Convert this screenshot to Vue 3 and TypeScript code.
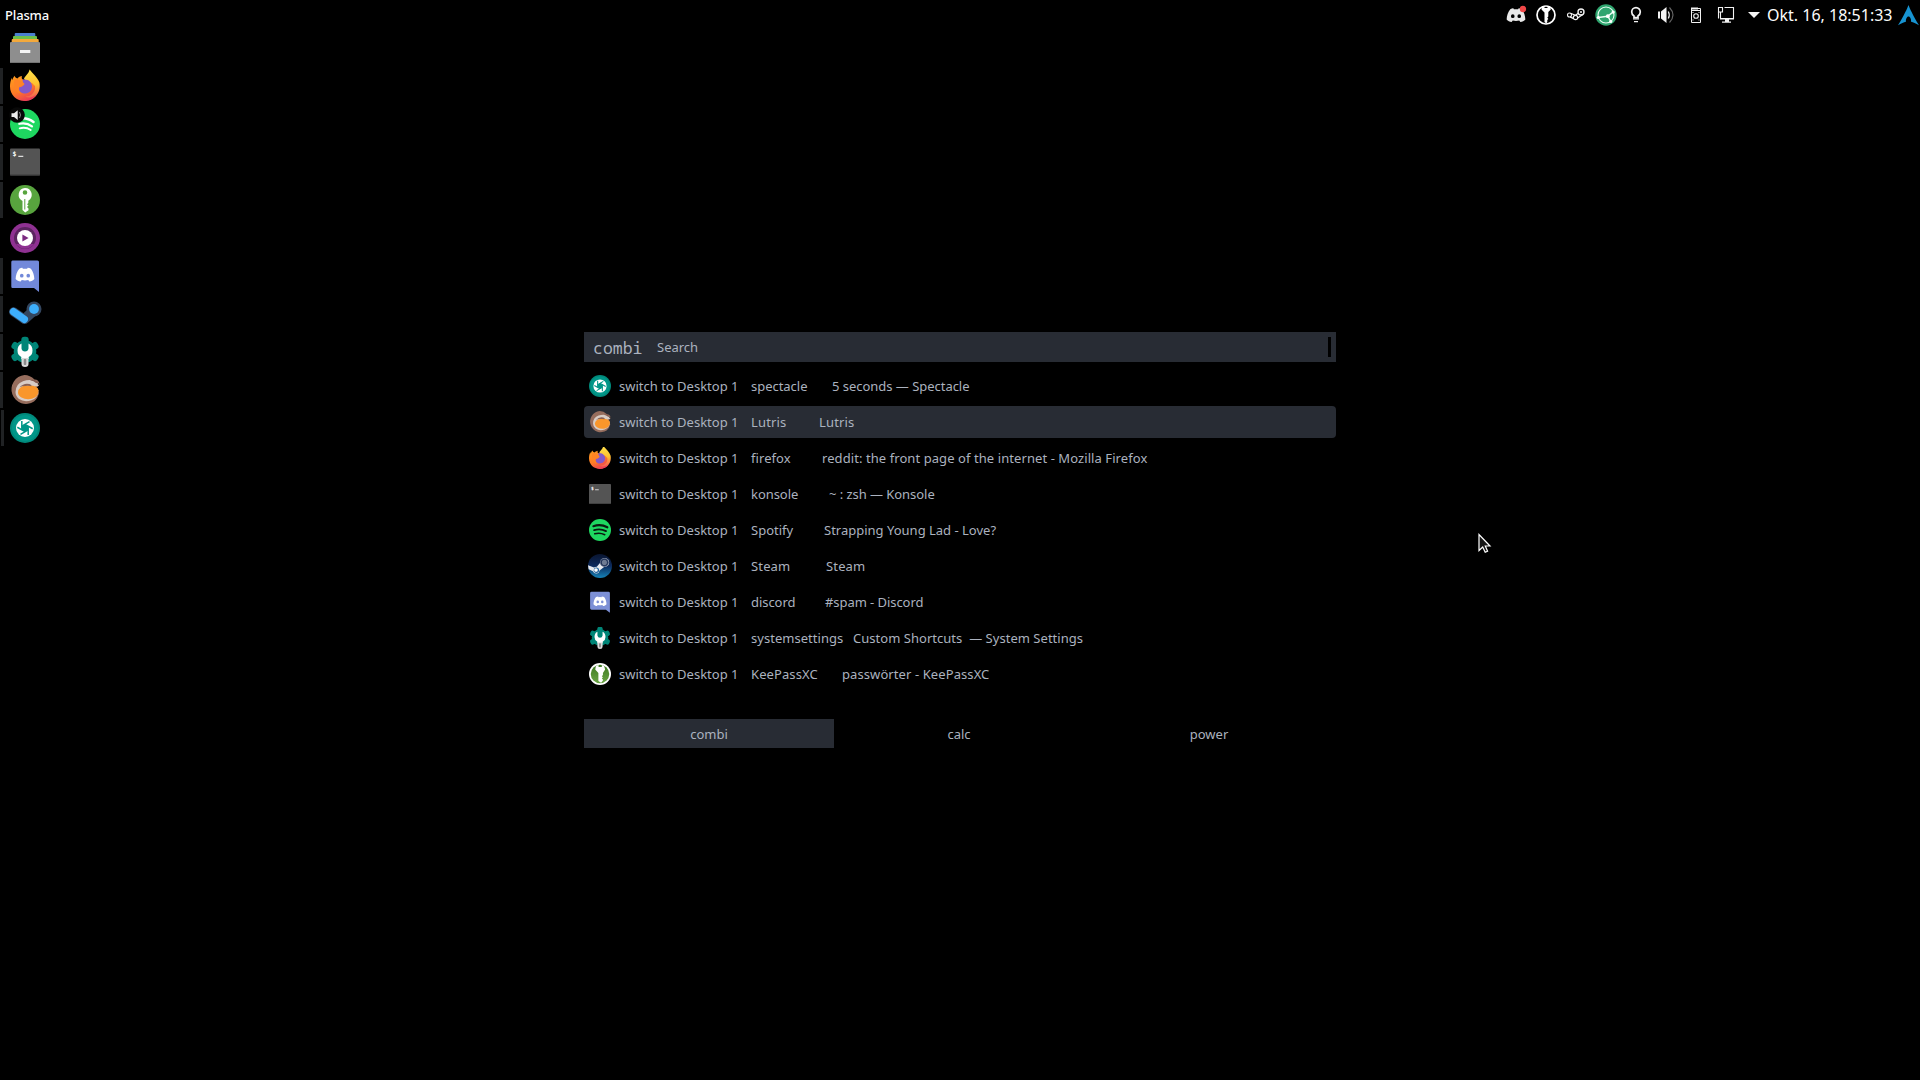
<script setup lang="ts">
interface DockItem { icon: string; running: boolean; active?: boolean }
interface WindowRow { icon: string; app: string; column: number; title: string; tracking?: number }

const dock: DockItem[] = [
  { icon: 'files', running: false },
  { icon: 'firefox', running: true },
  { icon: 'spotify-playing', running: true },
  { icon: 'konsole', running: true },
  { icon: 'keepass', running: true },
  { icon: 'player', running: false },
  { icon: 'discord', running: true },
  { icon: 'steam-blue', running: true },
  { icon: 'settings', running: true },
  { icon: 'lutris', running: true },
  { icon: 'spectacle', running: true, active: true },
]

// column: width in px the application name takes before the window title
// tracking: letter spacing in px for the row's texts
const rows: WindowRow[] = [
  { icon: 'spectacle', app: 'spectacle', column: 81, title: '5 seconds — Spectacle', tracking: -0.03 },
  { icon: 'lutris', app: 'Lutris', column: 68, title: 'Lutris', tracking: 0.15 },
  { icon: 'firefox', app: 'firefox', column: 71, title: 'reddit: the front page of the internet - Mozilla Firefox', tracking: 0.075 },
  { icon: 'konsole', app: 'konsole', column: 78, title: '~ : zsh — Konsole', tracking: -0.05 },
  { icon: 'spotify', app: 'Spotify', column: 73, title: 'Strapping Young Lad - Love?' },
  { icon: 'steam', app: 'Steam', column: 75, title: 'Steam', tracking: 0.15 },
  { icon: 'discord-light', app: 'discord', column: 74, title: '#spam - Discord', tracking: -0.06 },
  { icon: 'settings', app: 'systemsettings', column: 102, title: 'Custom Shortcuts  — System Settings', tracking: 0.03 },
  { icon: 'keepassxc', app: 'KeePassXC', column: 91, title: 'passwörter - KeePassXC', tracking: 0.09 },
]
const selected = 1
const tabs: string[] = ['combi', 'calc', 'power']
const tray: string[] = ['t-discord', 't-keepass', 't-steam', 't-sync', 't-bulb', 't-volume', 't-device', 't-screen']
</script>

<template>
  <div class="desktop">
    <svg class="defs" width="0" height="0" aria-hidden="true">
      <defs>
        <linearGradient id="g-fox" x1="0.2" y1="0" x2="0.7" y2="1">
          <stop offset="0" stop-color="#ff9a1f" /><stop offset="0.55" stop-color="#ff7a26" /><stop offset="1" stop-color="#e8365c" />
        </linearGradient>
        <linearGradient id="g-flame" x1="0.5" y1="0" x2="0.6" y2="1">
          <stop offset="0" stop-color="#ffe14a" /><stop offset="0.5" stop-color="#ffc02e" /><stop offset="1" stop-color="#f0455a" />
        </linearGradient>
        <linearGradient id="g-steam" x1="0" y1="0" x2="0" y2="1">
          <stop offset="0" stop-color="#0a1530" /><stop offset="0.5" stop-color="#0d2a5c" /><stop offset="1" stop-color="#1583b8" />
        </linearGradient>
        <linearGradient id="g-key" x1="0" y1="0" x2="0" y2="1">
          <stop offset="0" stop-color="#3f7a22" /><stop offset="1" stop-color="#6aa543" />
        </linearGradient>

        <symbol id="files" viewBox="0 0 30 30">
          <rect x="4.7" y="0" width="20.6" height="6" rx="1" fill="#4a7fcf" />
          <rect x="3" y="3" width="24" height="6" rx="1" fill="#6cc04a" />
          <rect x="1.7" y="6" width="27" height="6" rx="1" fill="#f3a93c" />
          <rect x="0" y="9" width="30" height="21" rx="1" fill="#8e8e8e" />
          <rect x="0" y="29" width="30" height="1" fill="#747474" />
          <rect x="10" y="17" width="10.3" height="3" fill="#f4f4f4" />
        </symbol>

        <symbol id="firefox" viewBox="0 0 30 30">
          <path d="M19.600-1.500C22 2 27.500 6 29.400 11.500C30.500 17 29 22 25.500 25.500C22 29 17.500 30 14 29.500C8 28 17 10 14 7.500C15.500 4.500 18.500 3 19.600-1.500Z" fill="url(#g-flame)" />
          <path d="M4.500 4.700C5 6 6 7 7.400 7.500C9 5.700 11 5.100 12 5C11.500 6.300 11.700 7.500 12.400 8.300L16.500 10L22 12L25 15C26 20.500 21.500 25.500 15.500 25.500C18 27 22 27 26.500 23.500C23.500 28 19 30 15 30C6.500 30 0 24 0 15.500C0 12.500.500 9 2 6.700L2.300 9.300C2.800 7.500 3.600 6 4.500 4.700Z" fill="url(#g-fox)" />
          <path d="M12.500 8.700C17.500 7.500 22 10.500 22 15.500C22 20 18.500 22.500 15 22.500C11 22.500 8.300 20 9 16C10.500 16.500 12.500 15.500 14.500 13.500C13.500 12.500 12.700 11 12.500 8.700Z" fill="#8359c9" />
          <path d="M4.500 8.500C8 7.500 10.500 10.500 14.500 12.600C13 14.800 10.500 14.800 9.300 16.200C8 18.500 9 21 11 22.500C5.500 22 3 14 4.500 8.500Z" fill="#ff8425" />
        </symbol>

        <symbol id="spotify-playing" viewBox="0 0 30 30">
          <circle cx="15" cy="15" r="15" fill="#1ed760" />
          <g fill="none" stroke="#fff" stroke-linecap="round">
            <path d="M9.500 9.500Q17.500 8.200 23.500 13" stroke-width="2.500" />
            <path d="M9.300 14.800Q16.500 13.200 22 17.300" stroke-width="2.200" />
            <path d="M9.700 19.300Q16 17.700 20.700 21" stroke-width="1.900" />
          </g>
          <circle cx="7" cy="6" r="7.800" fill="#080808" />
          <path d="M1.500 4.300h2.500l3.700-3v9.600l-3.700-3h-2.500z" fill="#eee" />
          <path d="M9.500 3q2 3 0 6" fill="none" stroke="#888" stroke-width="1" />
        </symbol>

        <symbol id="spotify" viewBox="0 0 30 30">
          <circle cx="15" cy="15" r="15" fill="#1ed760" />
          <g fill="none" stroke="#0a1a10" stroke-linecap="round">
            <path d="M6 9.800Q16 6.500 25 11.300" stroke-width="3" />
            <path d="M7 15.200Q15.500 12.500 23.200 16.500" stroke-width="2.500" />
            <path d="M7.800 20.200Q15 18 21.500 21.400" stroke-width="2.100" />
          </g>
        </symbol>

        <symbol id="konsole" viewBox="0 0 30 30">
          <rect x="0" y="1.500" width="30" height="27" rx="1" fill="#545454" />
          <rect x="0" y="27.500" width="30" height="1" fill="#3b3b3b" />
          <text x="2.600" y="9" font-family="DejaVu Sans Mono, monospace" font-weight="700" font-size="6.500" fill="#fff">$</text>
          <rect x="8.300" y="8.800" width="5" height="1" fill="#fff" />
        </symbol>

        <symbol id="keepass" viewBox="0 0 30 30">
          <circle cx="15" cy="15" r="15" fill="#58a43e" />
          <path fill-rule="evenodd" d="M15 3a6.800 6.800 0 0 1 3.300 12.700V18l-1.300 1.200 1.500 1.300-1.500 1.500 1.500 1.500v1.800L15.200 27.500 12.500 25V15.900A6.800 6.800 0 0 1 15 3ZM15 5.200a2.300 2.300 0 1 0 0 4.600 2.300 2.300 0 0 0 0-4.600ZM14.300 14v10.500h1V14Z" fill="#fff" />
        </symbol>

        <symbol id="keepassxc" viewBox="0 0 30 30">
          <circle cx="15" cy="15" r="15" fill="#fff" />
          <circle cx="15" cy="15" r="12.600" fill="url(#g-key)" />
          <path d="M9.500 3.600L13 2.700V5.500H17.500V2.700L20.500 3.600 22 9 19 13.500V16.500L17.500 18 19 19.500 17.500 21 19 22.500V24L16.500 27 12.800 24.500V13.500L8.500 9Z" fill="#fff" />
        </symbol>

        <symbol id="player" viewBox="0 0 30 30">
          <circle cx="15" cy="15" r="15" fill="#8f3192" />
          <circle cx="15" cy="15" r="11" fill="#5b2460" />
          <path d="M6 21A11 11 0 0 0 24 21Z" fill="#8f3192" />
          <circle cx="15" cy="15" r="8" fill="#fff" />
          <path d="M12.400 11.400L18.600 15 12.400 18.600Z" fill="#7b2a80" />
        </symbol>

        <symbol id="clyde" viewBox="0 0 22 15">
          <path fill-rule="evenodd" d="M5 1.200C6.300.500 7.600.200 8.200.200L8.800 1.300Q11 .900 13.200 1.300L13.800.200C15 .300 16.300.700 17.200 1.200C19.400 4 20.700 8 20.800 12C19.500 13.600 17.600 14.600 15.600 14.700L14.400 13.100Q11 14 7.600 13.100L6.400 14.700C4.400 14.600 2.500 13.600 1.200 12C1.300 8 2.600 4 5 1.200ZM7.600 6.500A1.900 2 0 1 0 7.600 10.500 1.900 2 0 0 0 7.600 6.500ZM14.400 6.500A1.900 2 0 1 0 14.400 10.500 1.900 2 0 0 0 14.400 6.500Z" />
        </symbol>

        <symbol id="discord" viewBox="0 0 30 30">
          <path d="M2.500-1H27.500Q29-1 29 .500V30.500L24 26.500H2.500Q1.300 26.500 1.300 25V.500Q1.300-1 2.500-1Z" transform="translate(0 .500)" fill="#7289da" />
          <use href="#clyde" x="4.500" y="6.500" width="21" height="14.500" fill="#fff" />
        </symbol>

        <symbol id="discord-light" viewBox="0 0 30 30">
          <path d="M3.500 1H26.500Q28.500 1 28.500 3V29.500L23 25.500H3.500Q1.500 25.500 1.500 23.500V3Q1.500 1 3.500 1Z" fill="#7d90d6" />
          <use href="#clyde" x="5" y="7" width="20" height="14" fill="#fff" />
        </symbol>

        <symbol id="steam-blue" viewBox="0 0 30 30">
          <path d="M14.500 20L24.500 11" fill="none" stroke="#34465f" stroke-width="10" stroke-linecap="round" />
          <path d="M3.500 12.700L14 20" fill="none" stroke="#34465f" stroke-width="9" stroke-linecap="round" />
          <circle cx="24" cy="10" r="7.500" fill="#34465f" />
          <path d="M3.500 12.700L14.300 20.300" fill="none" stroke="#3daefc" stroke-width="7.400" stroke-linecap="round" />
          <circle cx="24" cy="10" r="4.900" fill="#3daefc" />
        </symbol>

        <symbol id="steam" viewBox="0 0 30 30">
          <circle cx="15" cy="15" r="15" fill="url(#g-steam)" />
          <path d="M0 14L7.500 17Q9 16 11 16L15.500 10.500A5.500 5.500 0 1 1 20.500 16L14.500 20.500A4.300 4.300 0 0 1 6.200 21.500L.800 19Z" fill="#e6e8ec" />
          <circle cx="20.500" cy="10.500" r="5.600" fill="#566480" />
          <circle cx="20.500" cy="10.500" r="4.300" fill="#1a2b50" />
          <circle cx="20.500" cy="10.500" r="3.200" fill="#6f7b92" />
          <circle cx="10.500" cy="20.300" r="3.300" fill="#1c5f9b" />
          <circle cx="10" cy="20" r="2.300" fill="#fff" />
        </symbol>

        <symbol id="settings" viewBox="0 0 30 30">
          <g fill="#008577">
            <circle cx="15" cy="14.500" r="11.300" />
            <rect x="11.300" y="-.300" width="7.400" height="9" rx="3" />
            <rect x="11.300" y="-.300" width="7.400" height="9" rx="3" transform="rotate(60 15 14.500)" />
            <rect x="11.300" y="-.300" width="7.400" height="9" rx="3" transform="rotate(120 15 14.500)" />
            <rect x="11.300" y="-.300" width="7.400" height="9" rx="3" transform="rotate(240 15 14.500)" />
            <rect x="11.300" y="-.300" width="7.400" height="9" rx="3" transform="rotate(300 15 14.500)" />
          </g>
          <path d="M11.500 6.500V11.500Q12 14.500 15 14.500T18.500 11.500V6.500Q22.500 8.500 22.500 13.500Q22.500 18 18.700 20V22H11.300V20Q7.500 18 7.500 13.500Q7.500 8.500 11.500 6.500Z" fill="#fff" />
          <path d="M11.500 21H18.500V27Q18.500 30 15 30T11.500 27Z" fill="#d9d9d9" />
          <rect x="13.700" y="22" width="2.600" height="6" rx="1" fill="#8c8c8c" />
        </symbol>

        <symbol id="lutris" viewBox="0 0 30 30">
          <path d="M14.500 0Q20 0 24.500 4.500Q29 4.500 29.500 9.500Q28 12.500 25 12.500L29 18Q28 23 24 26.500A14.500 14.500 0 1 1 14.500 0Z" fill="#966d5d" />
          <path d="M5.500 17Q5.500 9 13 6.200Q19 4 26 6L29 8.500Q29.500 11.500 25 11.500L28.500 15.500Q28 23 21.500 25.300Q14 27.500 9 24Q5.500 21 5.500 17Z" fill="#d8ccc5" />
          <path d="M8 17.500Q8.500 10.800 17 10.500Q28 9.800 28.600 15.500Q28.500 22 22 23.700Q16 25 11.500 22.500Q8 20.500 8 17.500Z" fill="#f9962b" />
          <path d="M9.500 12.200Q14 7.500 19.500 9Q22 9.700 21.500 11.200Q18 10.500 15.500 11Q12 11 9.500 12.200Z" fill="#8a6153" />
          <path d="M20 5.200Q26 3.500 29.300 8.500L26 8Q24 6 20 5.200Z" fill="#82594d" />
          <circle cx="28.700" cy="9" r="1" fill="#222" />
        </symbol>

        <symbol id="spectacle" viewBox="0 0 30 30">
          <circle cx="15" cy="15" r="15" fill="#00897b" />
          <circle cx="15" cy="15" r="13" fill="#009688" />
          <circle cx="15" cy="15" r="9" fill="#fff" />
          <path d="M15 11.300L18.200 13.150V16.850L15 18.700 11.800 16.850V13.150Z" fill="#009688" />
          <g fill="none" stroke="#009688" stroke-width="1.500">
            <path v-for="a in 6" :key="a" d="M11.800 13.200L19.500 8.700" :transform="`rotate(${a * 60} 15 15)`" />
          </g>
        </symbol>

        <symbol id="t-discord" viewBox="0 0 22 22">
          <use href="#clyde" x="0.500" y="4" width="21" height="14.500" fill="#e8e8e8" />
          <circle cx="18" cy="5" r="3.200" fill="#f04747" />
        </symbol>
        <symbol id="t-keepass" viewBox="0 0 22 22">
          <circle cx="11" cy="11" r="9" fill="none" stroke="#fff" stroke-width="1.700" />
          <path d="M7 2.500L9.500 1.500V4H12.500V1.500L15 2.500 15.800 5.500 13.300 8V12.500L12.300 13.500 13.300 15 12.300 16V18L11.300 19.500 9.500 18V8.500L6.500 5.500Z" fill="#fff" />
        </symbol>
        <symbol id="t-steam" viewBox="0 0 22 22">
          <g fill="none" stroke="#f2f2f2">
            <circle cx="16" cy="8" r="3" stroke-width="1.400" />
            <circle cx="10.500" cy="13.500" r="2.200" stroke-width="1.200" />
            <circle cx="4.500" cy="11" r="2" stroke-width="1.100" />
            <path d="M5.500 9.200L10.500 11.200 13.200 9.200M5 12.900L8.600 14.600M12.600 14L17.500 10.700" stroke-width="1.200" />
          </g>
          <circle cx="16" cy="8" r="1" fill="#f2f2f2" />
        </symbol>
        <symbol id="t-sync" viewBox="0 0 22 22">
          <circle cx="11" cy="11" r="10.700" fill="#2fa56f" />
          <g fill="none" stroke="#e9fff3" stroke-width="1.100">
            <circle cx="11" cy="11" r="8" />
            <path d="M12.800 12.200L18.200 8M12.800 12.200L3.200 13.500M12.800 12.200L15.800 17.500" stroke-width="1.500" />
          </g>
          <g fill="#fff"><circle cx="12.800" cy="12.200" r="1.900" /><circle cx="18.200" cy="8" r="1.600" /><circle cx="3.300" cy="13.500" r="1.600" /><circle cx="15.800" cy="17.500" r="1.600" /></g>
        </symbol>
        <symbol id="t-bulb" viewBox="0 0 22 22">
          <path d="M9 13.500V12Q6.700 10.500 6.700 8A4.300 4.300 0 0 1 15.300 8Q15.300 10.500 13 12V13.500Z" fill="none" stroke="#f2f2f2" stroke-width="1.700" />
          <path d="M8 14.800H14M9 17.600H13" stroke="#f2f2f2" stroke-width="1.300" />
        </symbol>
        <symbol id="t-volume" viewBox="0 0 22 22">
          <path d="M3 7.500H5V14.500H3ZM6 7.500L11.500 3V19L6 14.500Z" fill="#f2f2f2" />
          <path d="M13.300 7.500Q15.300 11 13.300 14.500" fill="none" stroke="#e8e8e8" stroke-width="1.200" />
          <path d="M14.500 3.500Q21.500 11 14.500 18.500" fill="none" stroke="#666" stroke-width="1.100" />
        </symbol>
        <symbol id="t-device" viewBox="0 0 22 22">
          <path d="M6.500 4.500H15.500V18.500H6.500ZM6.500 6.500H15.500" fill="none" stroke="#f2f2f2" stroke-width="1" />
          <path d="M6 4.500H13" stroke="#f2f2f2" stroke-width="2" />
          <circle cx="11" cy="12" r="2.300" fill="none" stroke="#f2f2f2" stroke-width="1.100" />
          <path d="M7.500 8.500h1M13.500 8.500h1M7.500 16h1M13.500 16h1" stroke="#f2f2f2" stroke-width="1" />
        </symbol>
        <symbol id="t-screen" viewBox="0 0 22 22">
          <g fill="none" stroke="#f2f2f2" stroke-width="1.100">
            <path d="M3.500 3.500H7.500V8H3.500ZM5.500 8V14.500" />
            <path d="M9.500 3.500H18.500V14.500H7.500" />
            <path d="M3.500 8V14.500" />
          </g>
          <path d="M5 14H19V15.500H5ZM10 15.500H14V17.500H16V18.700H7V17.500H10Z" fill="#f2f2f2" />
        </symbol>
      </defs>
    </svg>

    <header class="panel">
      <span class="title">Plasma</span>
      <div class="tray">
        <svg v-for="name in tray" :key="name" class="tray-icon"><use :href="`#${name}`" /></svg>
      </div>
      <svg class="expander" viewBox="0 0 12 6"><path d="M0 0H12L6 6Z" fill="#f5f5f5" /></svg>
      <time class="clock">Okt. 16, 18:51:33</time>
      <svg class="arch" viewBox="0 0 22 22">
        <path d="M11 0C9.500 4 7 9.500 0 21.300C3.500 19 6 18 8.300 17.500C8 14.800 9.300 12 11 12S14 14.800 13.700 17.500C16 18 18.500 19 22 21.300C15 9.500 12.500 4 11 0Z" fill="#1793d1" />
      </svg>
    </header>

    <nav class="dock">
      <div v-for="item in dock" :key="item.icon" class="dock-item" :class="{ running: item.running, active: item.active }">
        <svg class="dock-icon"><use :href="`#${item.icon}`" /></svg>
      </div>
    </nav>

    <main class="launcher">
      <div class="input">
        <span class="prompt">combi</span>
        <span class="placeholder">Search</span>
        <i class="caret" />
      </div>
      <ul class="rows">
        <li v-for="(row, i) in rows" :key="row.app" class="row" :class="{ selected: i === selected }">
          <svg class="row-icon" :class="{ large: row.icon === 'steam' }"><use :href="`#${row.icon}`" /></svg>
          <span class="action">switch to Desktop 1</span>
          <span class="app" :style="{ width: `${row.column}px`, letterSpacing: `${row.tracking ?? 0}px` }">{{ row.app }}</span>
          <span class="window-title" :style="{ letterSpacing: `${row.tracking ?? 0}px` }">{{ row.title }}</span>
        </li>
      </ul>
      <div class="tabs">
        <span v-for="(tab, i) in tabs" :key="tab" class="tab" :class="{ current: i === 0 }">{{ tab }}</span>
      </div>
    </main>

    <svg class="pointer" viewBox="0 0 14 21">
      <path d="M1 1.500V17.500L4.700 14 7.200 19.300 9.600 18.200 7.300 13H12Z" fill="#151515" stroke="#fff" stroke-width="1.200" />
    </svg>
  </div>
</template>

<style>
body { background: #000; overflow: hidden; }
</style>

<style scoped>
.desktop {
  position: relative;
  width: 1920px;
  height: 1080px;
  background: #000;
  color: #abb2bf;
  font: 13px/20px "Noto Sans", "Open Sans", sans-serif;
  overflow: hidden;
  display: flex;
  flex-direction: column;
}
.defs { position: absolute; }
.panel {
  flex: none;
  height: 30px;
  display: flex;
  align-items: center;
  color: #fcfcfc;
}
.title { margin-left: 5px; font-size: 13px; font-weight: 500; letter-spacing: -0.15px; }
.tray { margin-left: auto; display: flex; gap: 8px; }
.tray-icon { width: 22px; height: 22px; display: block; }
.expander { width: 12px; height: 6px; margin-left: 11px; }
.clock { width: 131px; padding-left: 7px; box-sizing: border-box; font-size: 16px; white-space: nowrap; }
.arch { width: 21px; height: 21px; margin: 0 1px 0 7px; }
.dock { display: flex; flex-direction: column; gap: 2px; width: 50px; flex: none; }
.dock-item {
  height: 36px;
  display: flex;
  align-items: center;
  padding-left: 7px;
  border-left: 3px solid transparent;
}
.running { border-left-color: #202224; }
.active { margin-left: 1px; padding-left: 6px; }
.dock-icon { width: 30px; height: 30px; display: block; overflow: visible; }
.dock-icon use, .dock symbol { overflow: visible; }
symbol { overflow: visible; }
.launcher {
  width: 752px;
  margin: -114px auto 0;
  display: flex;
  flex-direction: column;
}
.input {
  height: 30px;
  background: #282c34;
  display: flex;
  align-items: center;
  padding: 0 5px 0 9px;
}
.prompt { font-family: "Noto Sans Mono", "DejaVu Sans Mono", monospace; font-size: 16.500px; width: 64px; padding-top: 1px; }
.placeholder { flex: 1; }
.caret { width: 3px; height: 20px; background: #000; }
.rows { list-style: none; margin: 8px 0 0; padding: 0; display: flex; flex-direction: column; gap: 4px; }
.row { height: 32px; display: flex; align-items: center; border-radius: 4px; padding-left: 5px; white-space: pre; }
.selected, .current { background: #282c34; }
.row-icon { width: 22px; height: 22px; margin-right: 8px; flex: none; }
.large { width: 24px; height: 24px; margin: 0 7px 0 -1px; }
.action { width: 132px; }
.app, .action { flex: none; }
.tabs { display: flex; height: 29px; margin: 29px 2px 0 0; }
.tab { flex: 1; display: flex; align-items: center; justify-content: center; }
.pointer { position: absolute; left: 1478px; top: 533px; width: 14px; height: 21px; }
</style>
